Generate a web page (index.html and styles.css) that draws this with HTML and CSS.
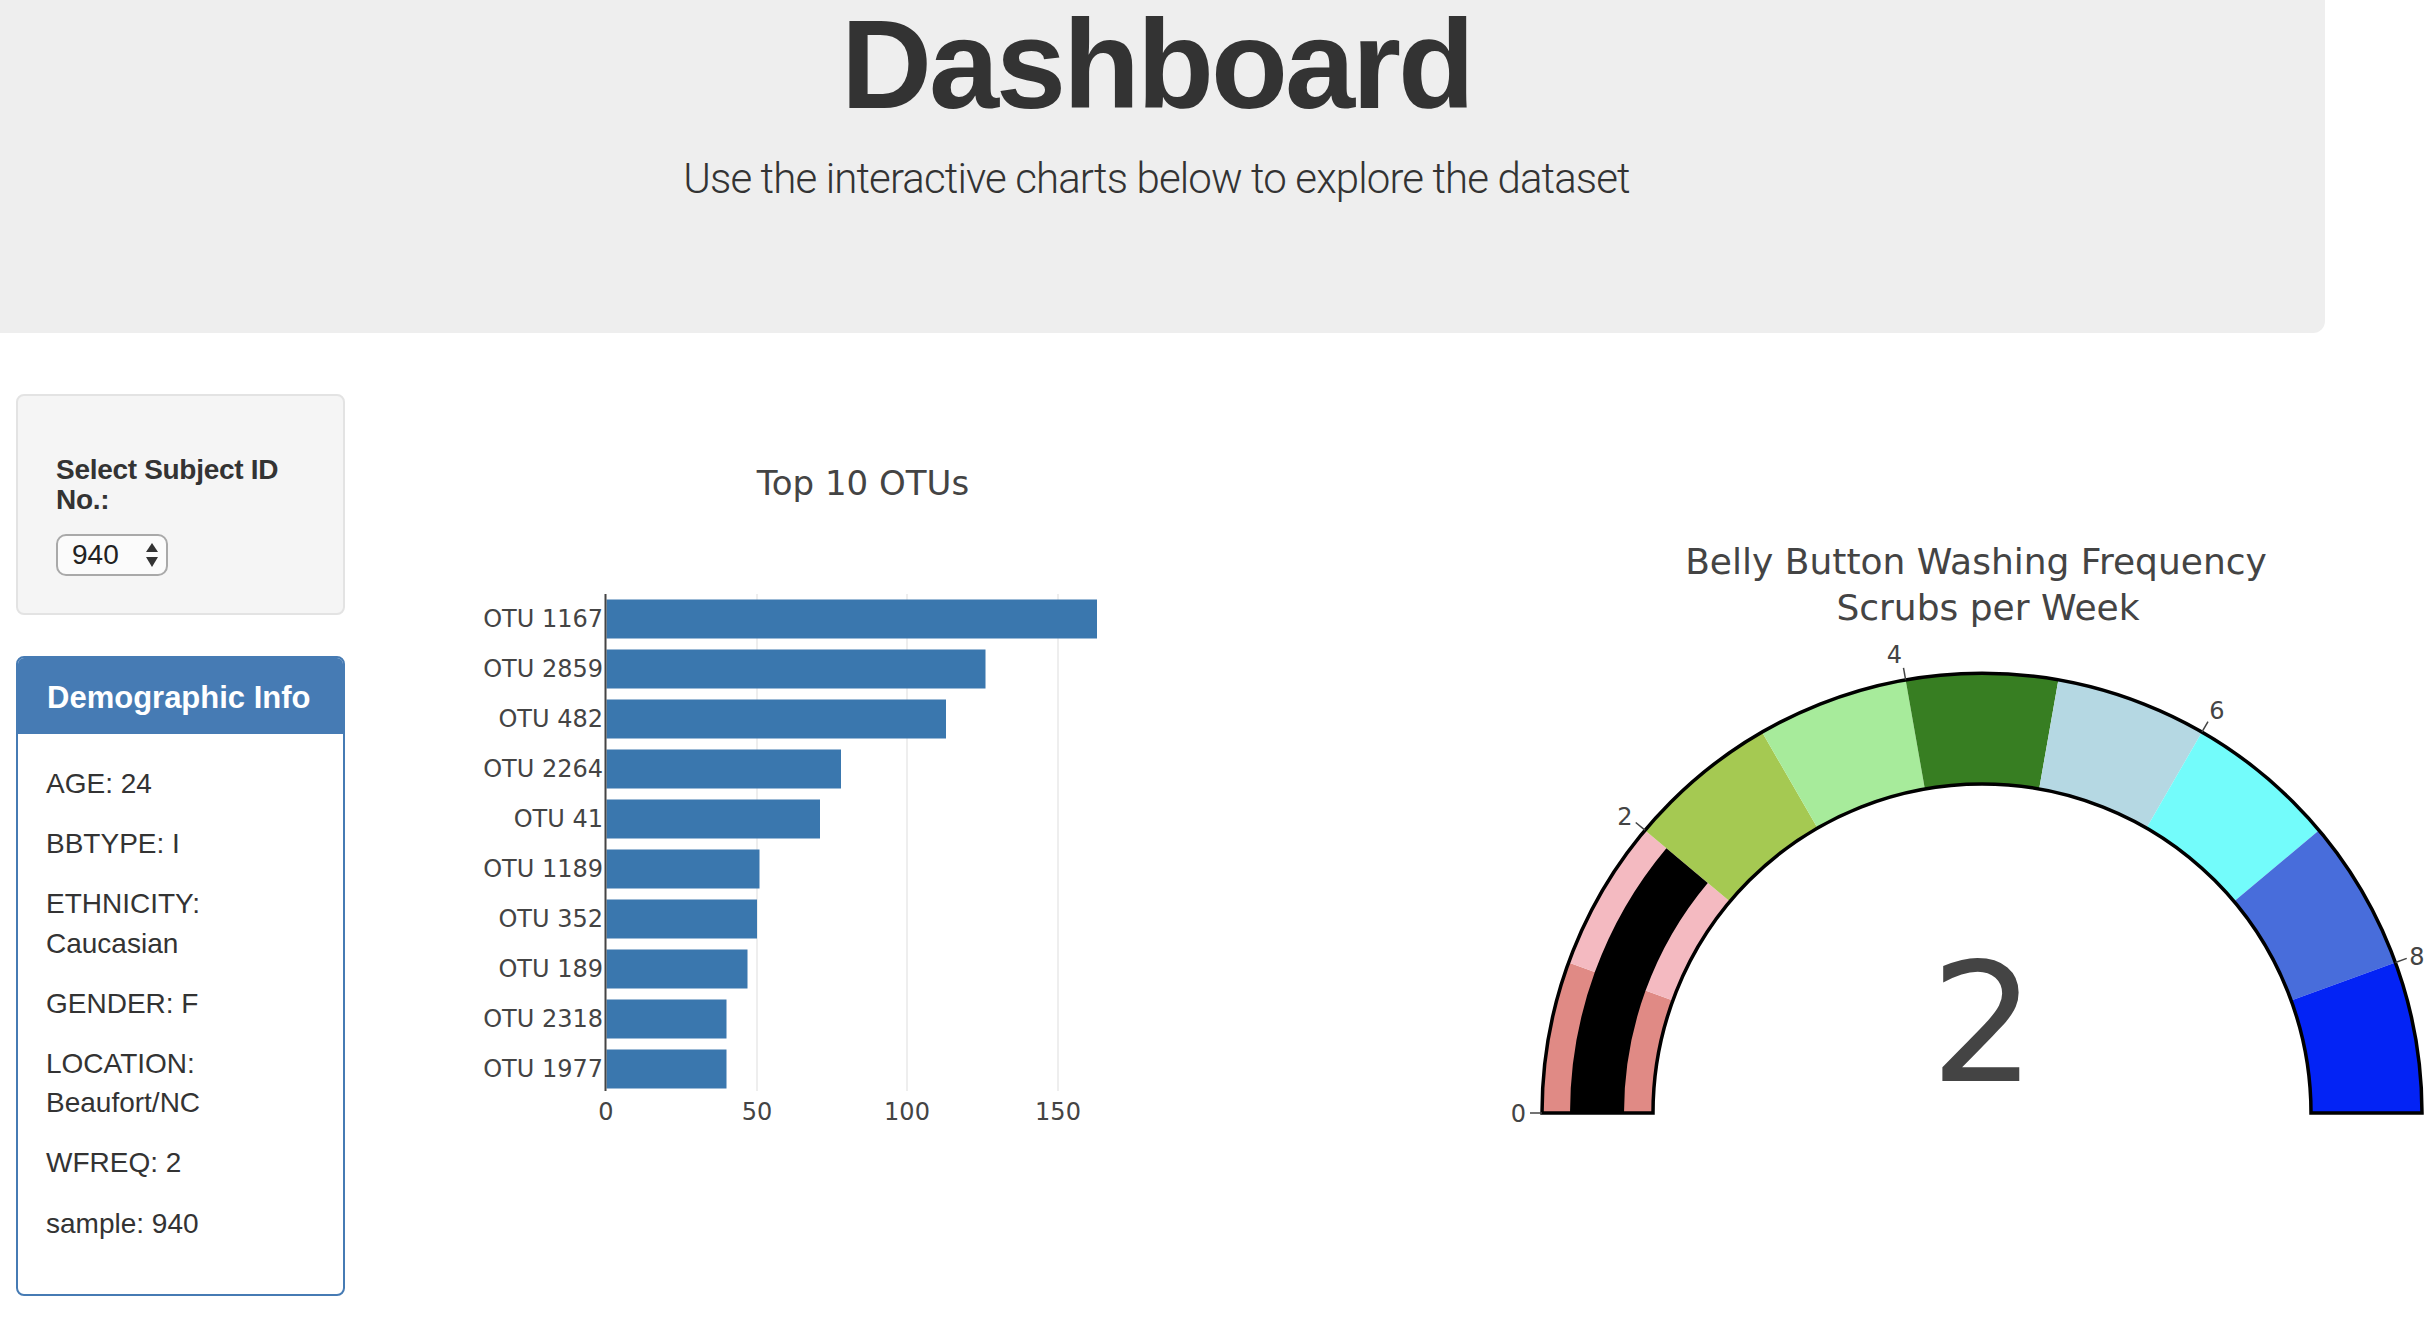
FILE: index.html
```html
<!DOCTYPE html>
<html lang="en">
<head>
<meta charset="utf-8">
<title>Belly Button Biodiversity Dashboard</title>
<link rel="stylesheet" href="styles.css">
</head>
<body>
<header class="jumbotron">
  <h1 class="jumbo-title">Dashboard</h1>
  <p class="jumbo-lead">Use the interactive charts below to explore the dataset</p>
</header>
<main class="main-row">
  <aside class="side-col">
    <div class="well">
      <h5 class="select-label">Select Subject ID No.:</h5>
      <div class="select-box">
        <span class="select-value">940</span>
        <svg class="select-arrows" width="12" height="24" viewBox="0 0 12 24"><path d="M6 0 L12 9 L0 9 Z"/><path d="M0 14 L12 14 L6 24 Z"/></svg>
      </div>
    </div>
    <div class="panel">
      <div class="panel-heading"><h3 class="panel-title">Demographic Info</h3></div>
      <div class="panel-body">
        <h6 class="meta-item">AGE: 24</h6>
        <h6 class="meta-item">BBTYPE: I</h6>
        <h6 class="meta-item">ETHNICITY: Caucasian</h6>
        <h6 class="meta-item">GENDER: F</h6>
        <h6 class="meta-item">LOCATION: Beaufort/NC</h6>
        <h6 class="meta-item">WFREQ: 2</h6>
        <h6 class="meta-item">sample: 940</h6>
      </div>
    </div>
  </aside>

  <svg class="chart chart-bar" width="800" height="800" viewBox="0 0 800 800">
    <text class="chart-title" x="463" y="101" text-anchor="middle">Top 10 OTUs</text>
    <line class="grid" x1="357" y1="200" x2="357" y2="697"/>
    <line class="grid" x1="507" y1="200" x2="507" y2="697"/>
    <line class="grid" x1="658" y1="200" x2="658" y2="697"/>
    <rect class="bar" x="206.5" y="205.5" width="490.5" height="39"/>
    <rect class="bar" x="206.5" y="255.5" width="379" height="39"/>
    <rect class="bar" x="206.5" y="305.5" width="339.5" height="39"/>
    <rect class="bar" x="206.5" y="355.5" width="234.5" height="39"/>
    <rect class="bar" x="206.5" y="405.5" width="213.5" height="39"/>
    <rect class="bar" x="206.5" y="455.5" width="153" height="39"/>
    <rect class="bar" x="206.5" y="505.5" width="150.5" height="39"/>
    <rect class="bar" x="206.5" y="555.5" width="141" height="39"/>
    <rect class="bar" x="206.5" y="605.5" width="120" height="39"/>
    <rect class="bar" x="206.5" y="655.5" width="120" height="39"/>
    <line class="axis" x1="205.5" y1="200" x2="205.5" y2="697"/>
    <text class="tick" x="203" y="233" text-anchor="end">OTU 1167</text>
    <text class="tick" x="203" y="283" text-anchor="end">OTU 2859</text>
    <text class="tick" x="203" y="333" text-anchor="end">OTU 482</text>
    <text class="tick" x="203" y="383" text-anchor="end">OTU 2264</text>
    <text class="tick" x="203" y="433" text-anchor="end">OTU 41</text>
    <text class="tick" x="203" y="483" text-anchor="end">OTU 1189</text>
    <text class="tick" x="203" y="533" text-anchor="end">OTU 352</text>
    <text class="tick" x="203" y="583" text-anchor="end">OTU 189</text>
    <text class="tick" x="203" y="633" text-anchor="end">OTU 2318</text>
    <text class="tick" x="203" y="683" text-anchor="end">OTU 1977</text>
    <text class="tick" x="206" y="726" text-anchor="middle">0</text>
    <text class="tick" x="357" y="726" text-anchor="middle">50</text>
    <text class="tick" x="507" y="726" text-anchor="middle">100</text>
    <text class="tick" x="658" y="726" text-anchor="middle">150</text>
  </svg>

  <svg class="chart chart-gauge" width="954" height="800" viewBox="0 0 954 800">
    <text class="gauge-title" x="496" y="179.6" text-anchor="middle">Belly Button Washing Frequency</text>
    <text class="gauge-title" x="508" y="226" text-anchor="middle">Scrubs per Week</text>
    <path class="step step-0" d="M62 719 A440 440 0 0 1 88.54 568.51 L192.84 606.47 A329 329 0 0 0 173 719 Z"/>
    <path class="step step-1" d="M88.54 568.51 A440 440 0 0 1 164.94 436.17 L249.97 507.52 A329 329 0 0 0 192.84 606.47 Z"/>
    <path class="step step-2" d="M164.94 436.17 A440 440 0 0 1 282 337.95 L337.5 434.08 A329 329 0 0 0 249.97 507.52 Z"/>
    <path class="step step-3" d="M282 337.95 A440 440 0 0 1 425.6 285.68 L444.87 395 A329 329 0 0 0 337.5 434.08 Z"/>
    <path class="step step-4" d="M425.6 285.68 A440 440 0 0 1 578.4 285.68 L559.13 395 A329 329 0 0 0 444.87 395 Z"/>
    <path class="step step-5" d="M578.4 285.68 A440 440 0 0 1 722 337.95 L666.5 434.08 A329 329 0 0 0 559.13 395 Z"/>
    <path class="step step-6" d="M722 337.95 A440 440 0 0 1 839.06 436.17 L754.03 507.52 A329 329 0 0 0 666.5 434.08 Z"/>
    <path class="step step-7" d="M839.06 436.17 A440 440 0 0 1 915.46 568.51 L811.16 606.47 A329 329 0 0 0 754.03 507.52 Z"/>
    <path class="step step-8" d="M915.46 568.51 A440 440 0 0 1 942 719 L831 719 A329 329 0 0 0 811.16 606.47 Z"/>
    <path class="gauge-bar" d="M90 719 A412 412 0 0 1 186.39 454.17 L227.76 488.88 A358 358 0 0 0 144 719 Z"/>
    <path class="gauge-outline" d="M62 719 A440 440 0 0 1 942 719 L831 719 A329 329 0 0 0 173 719 Z"/>
    <line class="gauge-tick" x1="62" y1="719" x2="50" y2="719"/>
    <line class="gauge-tick" x1="164.94" y1="436.17" x2="155.75" y2="428.46"/>
    <line class="gauge-tick" x1="425.6" y1="285.68" x2="423.51" y2="273.87"/>
    <line class="gauge-tick" x1="722" y1="337.95" x2="728" y2="327.56"/>
    <line class="gauge-tick" x1="915.46" y1="568.51" x2="926.74" y2="564.41"/>
    <text class="tick" x="46" y="728" text-anchor="end">0</text>
    <text class="tick" x="145" y="431" text-anchor="middle">2</text>
    <text class="tick" x="414.5" y="269" text-anchor="middle">4</text>
    <text class="tick" x="737" y="325" text-anchor="middle">6</text>
    <text class="tick" x="937" y="571" text-anchor="middle">8</text>
    <text class="gauge-value" x="503" y="687" text-anchor="middle">2</text>
  </svg>
</main>
</body>
</html>
```
FILE: styles.css
```css
html, body {
  margin: 0;
  padding: 0;
  background: #ffffff;
}

body {
  font-family: "Liberation Sans", Arial, Helvetica, sans-serif;
  color: #333333;
  overflow: hidden;
}

/* ---------- header ---------- */
.jumbotron {
  box-sizing: border-box;
  width: 2325px;
  height: 333px;
  padding: 2px 12px 0 0;
  background: #eeeeee;
  border-bottom-right-radius: 12px;
  text-align: center;
}

.jumbo-title {
  margin: 0;
  font-family: "Liberation Sans", Arial, sans-serif;
  font-weight: 700;
  font-size: 126px;
  line-height: 126px;
  letter-spacing: -3px;
  color: #333333;
}

.jumbo-lead {
  margin: 21px 0 0;
  font-family: Roboto, "Liberation Sans", sans-serif;
  font-weight: 300;
  font-size: 42px;
  line-height: 60px;
  letter-spacing: -0.88px;
  color: #333333;
}

/* ---------- main row ---------- */
.main-row {
  display: flex;
  align-items: flex-start;
  margin-top: 61px;
}

.side-col {
  flex: none;
  width: 329px;
  margin-left: 16px;
}

.well {
  box-sizing: border-box;
  height: 221px;
  padding: 38px;
  background: #f5f5f5;
  border: 2px solid #e3e3e3;
  border-radius: 8px;
}

.select-label {
  margin: 21px 0 19px;
  font-size: 28px;
  line-height: 30px;
  font-weight: 700;
  letter-spacing: -0.3px;
  color: #333333;
}

.select-box {
  box-sizing: border-box;
  width: 112px;
  height: 42px;
  padding: 0 8px 0 14px;
  display: flex;
  align-items: center;
  justify-content: space-between;
  background: #fbfbfb;
  border: 2px solid #a9a9a9;
  border-radius: 10px;
}

.select-value {
  font-size: 28px;
  color: #222222;
}

.select-arrows {
  display: block;
  fill: #333333;
}

.panel {
  margin-top: 41px;
  border: 2px solid #467bb4;
  border-radius: 8px;
  background: #ffffff;
  overflow: hidden;
}

.panel-heading {
  padding: 22px 20px 18px 29px;
  background: #467bb4;
}

.panel-title {
  margin: 0;
  font-size: 31px;
  line-height: 36px;
  font-weight: 700;
  color: #ffffff;
}

.panel-body {
  padding: 30px 28px 30px;
}

.meta-item {
  margin: 0 0 21px;
  font-size: 28px;
  line-height: 39.2px;
  font-weight: 400;
  color: #333333;
}

/* ---------- charts ---------- */
.chart {
  flex: none;
  display: block;
}

.chart-bar {
  margin-left: 55px;
}

.chart-gauge {
  margin-left: 280px;
}

.chart text {
  font-family: "DejaVu Sans", Verdana, sans-serif;
  fill: #444444;
}

.chart-title {
  font-size: 34px;
}

.gauge-title {
  font-size: 36px;
}

.tick {
  font-size: 24px;
}

.grid {
  stroke: #eeeeee;
  stroke-width: 2;
}

.axis {
  stroke: #444444;
  stroke-width: 2;
}

.bar {
  fill: #3a77ae;
}

.step-0 { fill: #e08a85; }
.step-1 { fill: #f4bac1; }
.step-2 { fill: #a5c952; }
.step-3 { fill: #a7eb9b; }
.step-4 { fill: #377e22; }
.step-5 { fill: #b5d8e3; }
.step-6 { fill: #73fcfb; }
.step-7 { fill: #486ddb; }
.step-8 { fill: #0323f5; }

.gauge-bar {
  fill: #000000;
}

.gauge-outline {
  fill: none;
  stroke: #000000;
  stroke-width: 3.5;
}

.gauge-tick {
  stroke: #444444;
  stroke-width: 1.5;
}

.chart .gauge-value {
  font-size: 166px;
}
```
